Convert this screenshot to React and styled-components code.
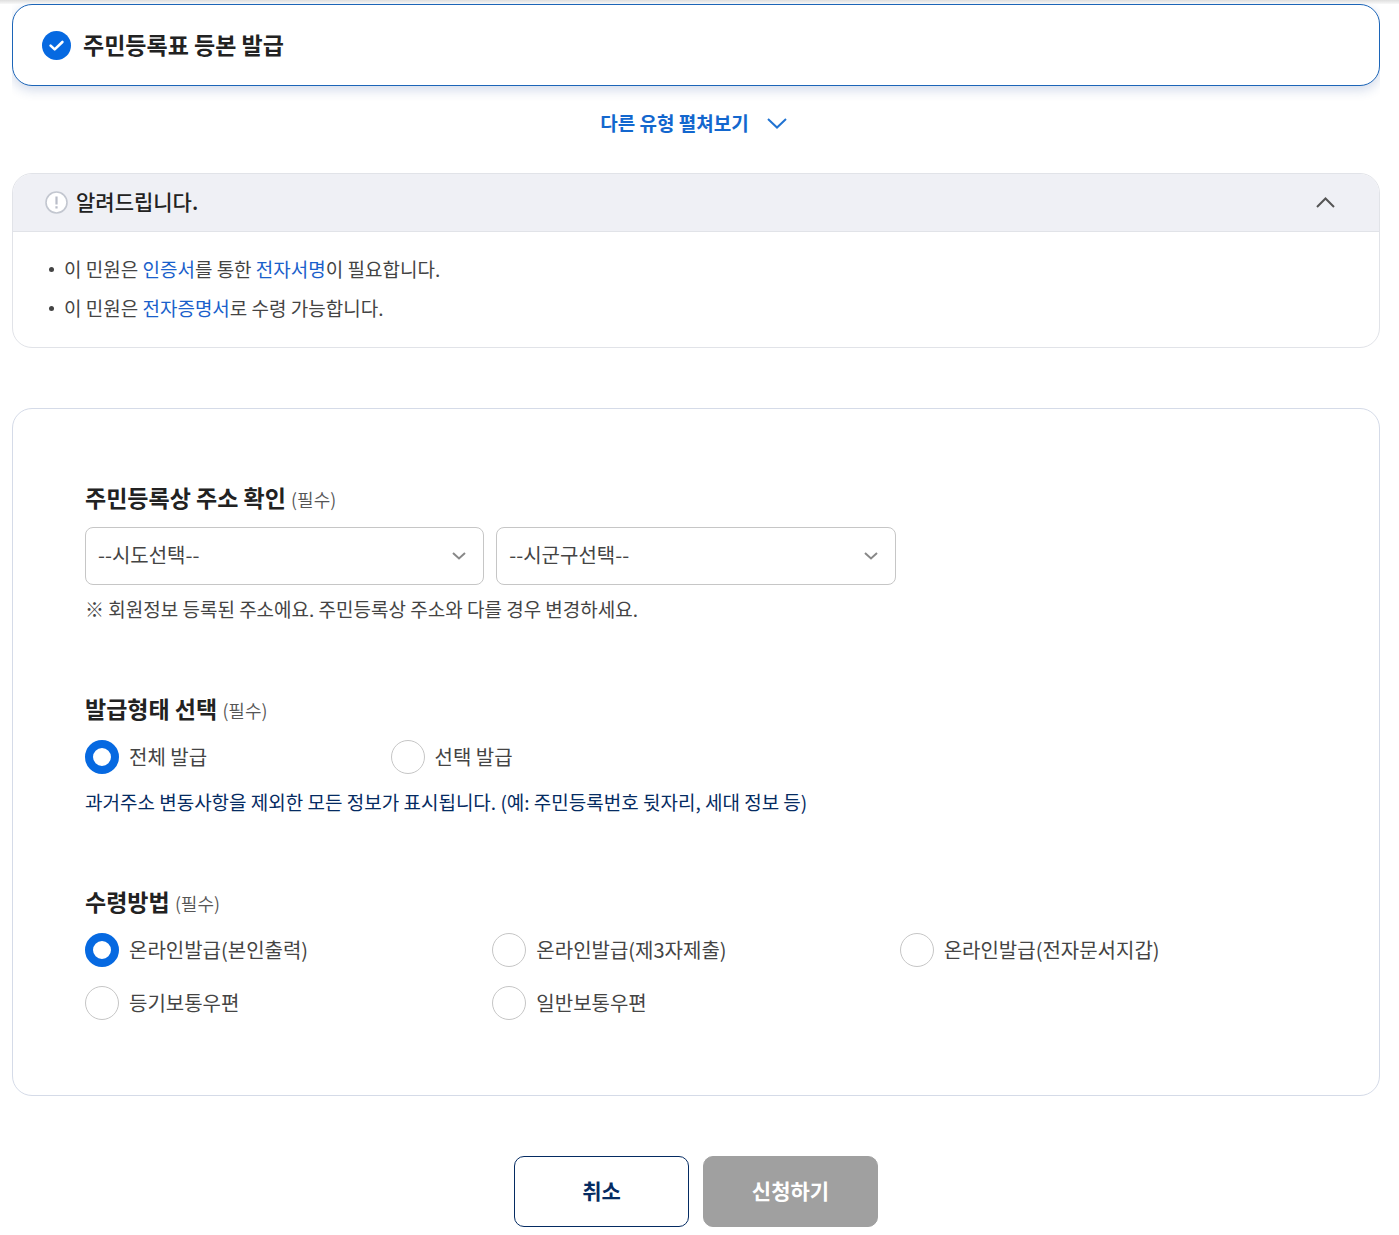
import React from "react";
import styled, { createGlobalStyle } from "styled-components";

const issueTypes = ["전체 발급", "선택 발급"];

const receiveMethods = [
  "온라인발급(본인출력)",
  "온라인발급(제3자제출)",
  "온라인발급(전자문서지갑)",
  "등기보통우편",
  "일반보통우편",
];

const Chevron = ({ width, height, stroke, up }) => (
  <svg
    width={width}
    height={height}
    viewBox={`0 0 ${width} ${height}`}
    fill="none"
    stroke={stroke}
    strokeWidth="2"
    aria-hidden="true"
  >
    <path
      d={
        up
          ? `M1 ${height - 1} L${width / 2} 1.5 L${width - 1} ${height - 1}`
          : `M1 1 L${width / 2} ${height - 1.5} L${width - 1} 1`
      }
    />
  </svg>
);

const RadioGroup = ({ name, items, columns }) => {
  const [selected, setSelected] = React.useState(items[0]);

  return (
    <RadioGrid $columns={columns}>
      {items.map((item) => (
        <RadioLabel key={item}>
          <Radio
            type="radio"
            name={name}
            value={item}
            checked={selected === item}
            onChange={() => setSelected(item)}
          />
          {item}
        </RadioLabel>
      ))}
    </RadioGrid>
  );
};

const App = () => {
  const [open, setOpen] = React.useState(true);

  return (
    <React.Fragment>
      <GlobalStyle />
      <TopShade />
      <Page>
        <TypeArea>
          <TypeCard>
            <svg width="29" height="29" viewBox="0 0 29 29" aria-hidden="true">
              <circle cx="14.5" cy="14.5" r="14.5" fill="#0669e1" />
              <path
                d="M8.6 14.6 L12.7 18.4 L20.4 11"
                fill="none"
                stroke="#fff"
                strokeWidth="2.6"
                strokeLinecap="round"
                strokeLinejoin="round"
              />
            </svg>
            <TypeTitle>주민등록표 등본 발급</TypeTitle>
          </TypeCard>
        </TypeArea>

        <MoreButton type="button">
          다른 유형 펼쳐보기
          <Chevron width={20} height={11} stroke="#2173d2" />
        </MoreButton>

        <Notice>
          <NoticeHead
            type="button"
            aria-expanded={open}
            onClick={() => setOpen(!open)}
          >
            <svg width="23" height="23" viewBox="0 0 23 23" aria-hidden="true">
              <circle
                cx="11.5"
                cy="11.5"
                r="10.5"
                fill="#fff"
                stroke="#c3c7d0"
                strokeWidth="1.6"
              />
              <path d="M11.5 5.5 V13.6" stroke="#b9bdc8" strokeWidth="2.2" />
              <path d="M11.5 15.2 V17.4" stroke="#b9bdc8" strokeWidth="2.2" />
            </svg>
            <NoticeTitle>알려드립니다.</NoticeTitle>
            <Chevron width={19} height={11} stroke="#555" up={open} />
          </NoticeHead>
          {open && (
            <NoticeList>
              <NoticeItem>
                이 민원은 <Em>인증서</Em>를 통한 <Em>전자서명</Em>이 필요합니다.
              </NoticeItem>
              <NoticeItem>
                이 민원은 <Em>전자증명서</Em>로 수령 가능합니다.
              </NoticeItem>
            </NoticeList>
          )}
        </Notice>

        <form onSubmit={(e) => e.preventDefault()}>
          <FormCard>
            <Field>
              <Legend>
                주민등록상 주소 확인 <Required>(필수)</Required>
              </Legend>
              <SelectRow>
                <SelectBox>
                  <Select aria-label="시도선택">
                    <option>--시도선택--</option>
                  </Select>
                  <Chevron width={14} height={8} stroke="#888" />
                </SelectBox>
                <SelectBox>
                  <Select aria-label="시군구선택">
                    <option>--시군구선택--</option>
                  </Select>
                  <Chevron width={14} height={8} stroke="#888" />
                </SelectBox>
              </SelectRow>
              <Help>
                ※ 회원정보 등록된 주소에요. 주민등록상 주소와 다를 경우
                변경하세요.
              </Help>
            </Field>

            <Field>
              <Legend>
                발급형태 선택 <Required>(필수)</Required>
              </Legend>
              <RadioGroup name="issueType" items={issueTypes} columns={4} />
              <Help $navy>
                과거주소 변동사항을 제외한 모든 정보가 표시됩니다. (예:
                주민등록번호 뒷자리, 세대 정보 등)
              </Help>
            </Field>

            <Field>
              <Legend>
                수령방법 <Required>(필수)</Required>
              </Legend>
              <RadioGroup name="receive" items={receiveMethods} columns={3} />
            </Field>
          </FormCard>

          <Buttons>
            <Button type="button">취소</Button>
            <Button type="submit" $gray>
              신청하기
            </Button>
          </Buttons>
        </form>
      </Page>
    </React.Fragment>
  );
};

export default App;

const GlobalStyle = createGlobalStyle`
  * {
    box-sizing: border-box;
  }

  body {
    margin: 0;
    background: #fff;
    color: #444;
    font-family: "Noto Sans CJK KR", sans-serif;
    font-size: 19px;
    word-break: keep-all;
  }

  button,
  select {
    font-family: inherit;
    cursor: pointer;
  }
`;

const TopShade = styled.div`
  height: 4px;
  background: linear-gradient(#dedede, #f8f8f8);
`;

const Page = styled.main`
  padding: 0 19px 8px 12px;
`;

const TypeArea = styled.section`
  padding-bottom: 20px;
  overflow: hidden;
`;

const TypeCard = styled.div`
  display: flex;
  align-items: center;
  gap: 12px;
  height: 82px;
  padding: 0 29px;
  border: 1px solid #1c65b8;
  border-radius: 20px;
  background: #fff;
  box-shadow: 0 4px 12px rgba(30, 70, 150, 0.2);
`;

const TypeTitle = styled.h1`
  margin: 0;
  padding-bottom: 3px;
  font-size: 23px;
  line-height: 32px;
  font-weight: 700;
  color: #222;
`;

const MoreButton = styled.button`
  display: flex;
  align-items: center;
  gap: 18px;
  margin: 0 auto;
  padding: 3px 5px 3px 0;
  border: 0;
  background: none;
  color: #1367ce;
  font-size: 19px;
  line-height: 28px;
  font-weight: 700;
`;

const Notice = styled.section`
  margin-top: 33px;
  border: 1px solid #e1e3e8;
  border-radius: 20px;
  overflow: hidden;
`;

const NoticeHead = styled.button`
  display: flex;
  align-items: center;
  gap: 8px;
  width: 100%;
  height: 58px;
  padding: 0 44px 0 32px;
  border: 0;
  border-bottom: 1px solid #e1e3e8;
  background: #eff0f5;
  text-align: left;
`;

const NoticeTitle = styled.span`
  flex: 1;
  padding-bottom: 3px;
  font-size: 21px;
  line-height: 32px;
  font-weight: 500;
  color: #222;
`;

const NoticeList = styled.ul`
  display: flex;
  flex-direction: column;
  gap: 10px;
  margin: 0;
  padding: 22px 36px 25px;
  list-style: none;
`;

const NoticeItem = styled.li`
  line-height: 29px;

  &::before {
    content: "";
    display: inline-block;
    width: 5px;
    height: 5px;
    margin-right: 10px;
    border-radius: 50%;
    background: #444;
    vertical-align: 5px;
  }
`;

const Em = styled.span`
  color: #1a5fcb;
`;

const FormCard = styled.div`
  display: flex;
  flex-direction: column;
  gap: 69px;
  margin-top: 60px;
  padding: 72px 72px 75px;
  border: 1px solid #d5dbe8;
  border-radius: 20px;
`;

const Field = styled.fieldset`
  min-width: 0;
  margin: 0;
  padding: 0;
  border: 0;
`;

const Legend = styled.legend`
  padding: 0;
  font-size: 23px;
  line-height: 32px;
  font-weight: 700;
  color: #222;
`;

const Required = styled.span`
  font-size: 18px;
  line-height: 1;
  font-weight: 350;
  color: #555;
`;

const SelectRow = styled.div`
  display: grid;
  grid-template-columns: repeat(3, 1fr);
  gap: 12px;
  margin: 14px 0 10px;
`;

const SelectBox = styled.div`
  position: relative;

  svg {
    position: absolute;
    top: 25px;
    right: 18px;
    pointer-events: none;
  }
`;

const Select = styled.select`
  appearance: none;
  display: block;
  width: 100%;
  height: 58px;
  padding: 0 40px 4px 12px;
  border: 1px solid #c6c6c6;
  border-radius: 8px;
  background: #fff;
  color: #444;
  font-size: 20px;
`;

const Help = styled.p`
  margin: 0;
  line-height: 28px;
  color: ${(props) => (props.$navy ? "#052b62" : "#444")};
`;

const RadioGrid = styled.div`
  display: grid;
  grid-template-columns: repeat(${(props) => props.$columns}, 1fr);
  row-gap: 19px;
  margin-top: 16px;

  & + ${Help} {
    margin-top: 14px;
  }
`;

const RadioLabel = styled.label`
  display: flex;
  align-items: center;
  gap: 10px;
  font-size: 20px;
  line-height: 34px;
  cursor: pointer;
`;

const Radio = styled.input`
  appearance: none;
  flex: none;
  width: 34px;
  height: 34px;
  margin: 0;
  border: 1px solid #c6c6c6;
  border-radius: 50%;
  background: #fff;

  &:checked {
    border: 8px solid #0669e1;
  }
`;

const Buttons = styled.div`
  display: flex;
  justify-content: center;
  gap: 14px;
  margin-top: 60px;
`;

const Button = styled.button`
  width: 175px;
  height: 71px;
  padding: 0 0 4px;
  border: 1px solid ${(props) => (props.$gray ? "#a0a0a0" : "#052b62")};
  border-radius: 10px;
  background: ${(props) => (props.$gray ? "#a0a0a0" : "#fff")};
  color: ${(props) => (props.$gray ? "#fff" : "#052b62")};
  font-size: 21px;
  font-weight: 700;
`;
